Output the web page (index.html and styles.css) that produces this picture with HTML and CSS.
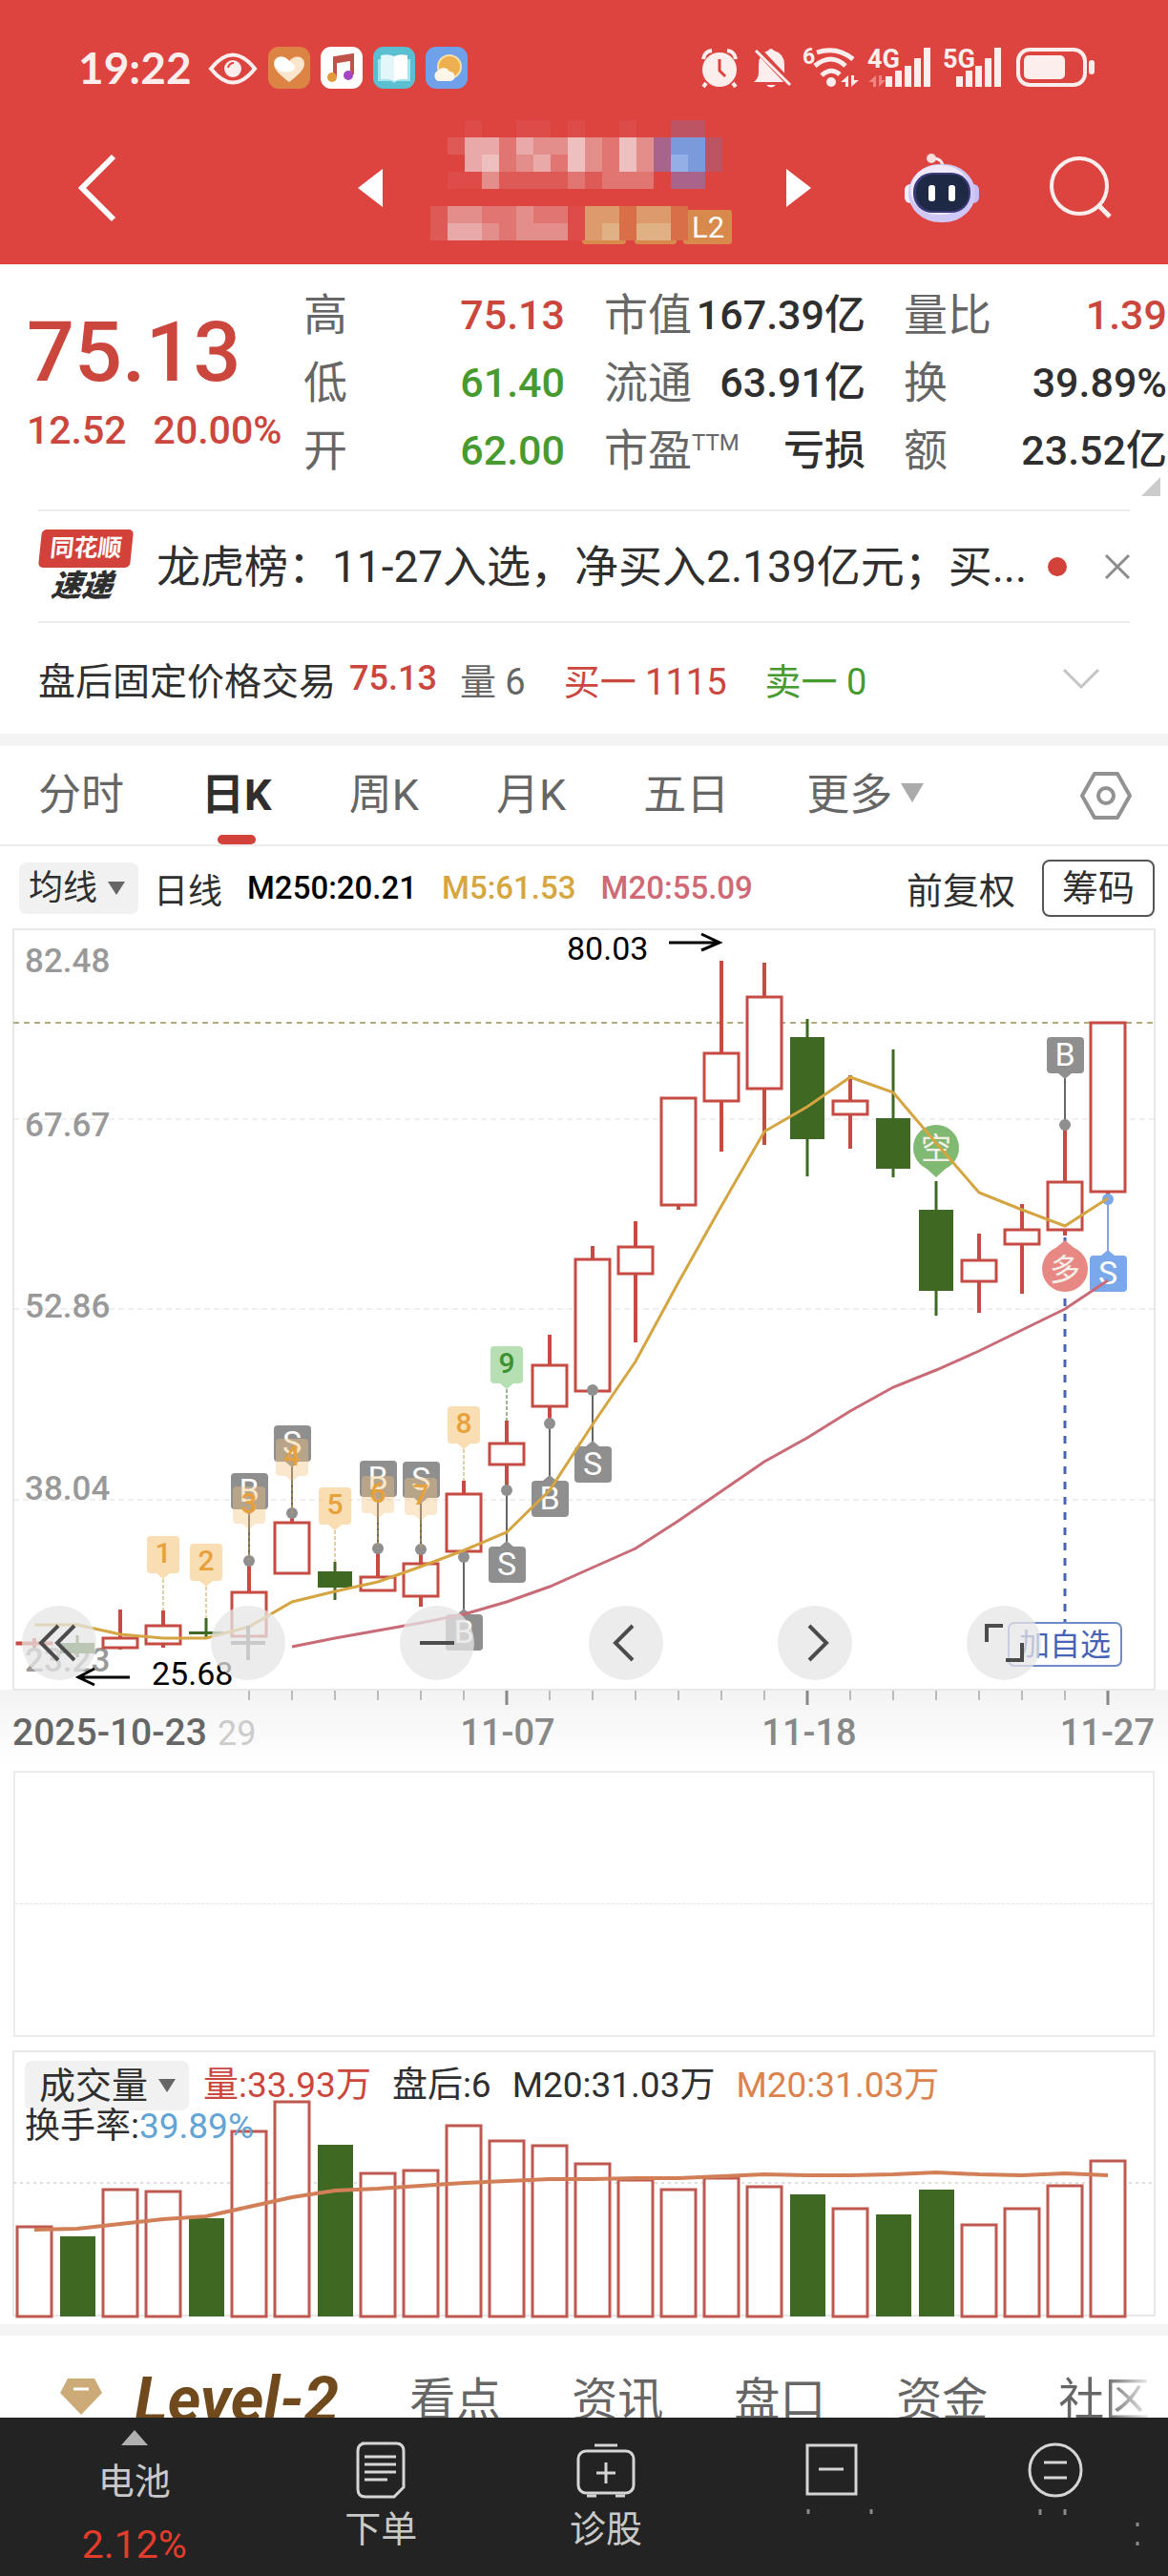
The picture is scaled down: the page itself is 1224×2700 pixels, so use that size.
FILE: index.html
```html
<!DOCTYPE html>
<html lang="zh-CN">

	<head>
		<meta charset="UTF-8">
		<meta name="viewport" content="width=device-width, initial-scale=1">
		<title>日K</title>
		<link rel="stylesheet" href="styles.css">
	</head>

	<body>
		<header id="header">
			<div class="status">
				<time>19:22</time>
				<svg class="eye" viewBox="0 0 50 44">
					<path d="M2 23Q25 -6 48 23Q25 52 2 23Z" fill="none" stroke="#fdeeee" stroke-width="4" />
					<circle cx="25" cy="23" r="9" fill="#fdeeee" />
					<path d="M20 22q1-5 6-5" fill="none" stroke="#dd433f" stroke-width="2" />
				</svg>
				<svg class="app" viewBox="0 0 44 44">
					<rect width="44" height="44" rx="11" fill="#dc8444" />
					<path d="M22 37C13 30 6 24 6 18C6 9 17 8 22 15C27 8 38 9 38 18C38 24 31 30 22 37Z" fill="#fbe6cd" />
					<path d="M8 22C3 13 13 7 20 13L28 20Q28 26 22 26Q14 28 8 22Z" fill="#fff" />
				</svg>
				<svg class="app" viewBox="0 0 44 44">
					<rect width="44" height="44" rx="11" fill="#fff" />
					<path d="M15 31V12L33 9V29" fill="none" stroke="#c0524a" stroke-width="4" />
					<path d="M15 15L33 12" stroke="#c0524a" stroke-width="5" />
					<circle cx="12" cy="32" r="5" fill="#e39a3c" />
					<circle cx="29" cy="30" r="5" fill="#a646c4" />
				</svg>
				<svg class="app" viewBox="0 0 44 44">
					<rect width="44" height="44" rx="11" fill="#5bbfd2" />
					<path d="M5 13H39V36H25L22 38L19 36H5Z" fill="#a5e3ee" />
					<path d="M8 9Q16 7 22 10V36Q16 33 8 34Z" fill="#e3f7fb" />
					<path d="M36 9Q28 7 22 10V36Q28 33 36 34Z" fill="#fff" />
				</svg>
				<svg class="app" viewBox="0 0 44 44">
					<rect width="44" height="44" rx="11" fill="#6fa0ea" />
					<circle cx="25" cy="21" r="13" fill="#f7e0a8" />
					<circle cx="25" cy="21" r="11" fill="#eeb04e" />
					<path d="M13 36a6 6 0 0 1 0-11a7 7 0 0 1 12 1a5 5 0 0 1 1 10Z" fill="#fff6ea" />
				</svg>
				<svg class="signals" viewBox="0 0 412 44">
					<g fill="#fdeeee">
						<circle cx="19" cy="24" r="18" />
						<path d="M5 38l-3 4M33 38l3 4M2 13q1-8 9-9M36 13q-1-8-9-9" fill="none" stroke="#fdeeee" stroke-width="4" />
						<path d="M19 13v12l6 6" fill="none" stroke="#dd433f" stroke-width="3" />
						<path d="M55 37q5-4 5-10v-8q0-12 10-15q3-4 6 0q11 3 11 15v8q0 6 4 10Z" />
						<path d="M68 40h10q-5 5-10 0" />
						<path d="M57 1l36 38" stroke="#dd433f" stroke-width="7" />
						<path d="M57 4l36 36" stroke="#fdeeee" stroke-width="3" />
						<circle cx="136" cy="37" r="5" />
						<path d="M121 6q21-7 38 7M119 20q17-14 32 0M126 30q10-9 19-1" fill="none" stroke="#fdeeee" stroke-width="5" />
						<path d="M154 30v12h-3v-5h-5zM157 42v-12h3v5h5z" />
						<text x="106" y="18" font-size="23">6</text>
						<text x="174" y="22" font-size="27">4G</text>
						<path d="M183 30v12h-3v-5h-5zM186 42v-12h3v5h4z" fill="#ef8583" />
						<path d="M193 31h7v11h-7zM203 25h7v17h-7zM213 20h7v22h-7zM223 12h7v30h-7zM233 1h7v41h-7z" />
						<text x="253" y="22" font-size="27">5G</text>
						<path d="M267 31h7v11h-7zM277 25h7v17h-7zM287 20h7v22h-7zM297 12h7v30h-7zM307 1h7v41h-7z" />
						<rect x="332" y="3" width="70" height="37" rx="12" fill="none" stroke="#fdeeee" stroke-width="4" />
						<rect x="338" y="9" width="43" height="25" rx="5" />
						<rect x="406" y="14" width="6" height="15" rx="3" />
					</g>
				</svg>
			</div>
			<nav class="title">
				<button class="back" aria-label="返回">
					<svg viewBox="0 0 40 72"><path d="M37 3L4 36L37 69" fill="none" stroke="#fff" stroke-width="6" /></svg>
				</button>
				<div class="stock">
					<button aria-label="上一只"><svg viewBox="0 0 26 40"><path d="M26 0V40L0 20Z" fill="#fff" /></svg></button>
					<svg id="mosaic" viewBox="0 0 323 144"></svg>
					<button aria-label="下一只"><svg viewBox="0 0 26 40"><path d="M0 0V40L26 20Z" fill="#fff" /></svg></button>
				</div>
				<div class="tools">
					<button aria-label="智能助手">
						<svg class="robot" viewBox="0 0 78 72">
							<path d="M28 5q12-1 12 10" fill="none" stroke="#f9e6ea" stroke-width="3" />
							<circle cx="28" cy="5" r="5" fill="#f9dcdc" />
							<rect x="0" y="32" width="12" height="20" rx="6" fill="#f3effc" />
							<rect x="66" y="32" width="12" height="20" rx="6" fill="#c5bdf4" />
							<rect x="4" y="11" width="70" height="61" rx="33" fill="#cfc8f6" />
							<rect x="6" y="12" width="62" height="52" rx="29" fill="#efe9fb" />
							<rect x="9" y="20" width="60" height="42" rx="20" fill="#3a3a78" />
							<rect x="12" y="22" width="55" height="38" rx="18" fill="#1d2945" />
							<rect x="25" y="33" width="7" height="17" rx="3" fill="#fff" />
							<rect x="46" y="33" width="7" height="17" rx="3" fill="#fff" />
						</svg>
					</button>
					<button aria-label="搜索">
						<svg class="search" viewBox="0 0 66 66"><circle cx="31" cy="31" r="29" fill="none" stroke="#fdeeee" stroke-width="4" /><path d="M51 51L63 63" stroke="#fdeeee" stroke-width="5" /></svg>
					</button>
				</div>
			</nav>
		</header>

		<section id="quote">
			<div class="now">
				<strong>75.13</strong>
				<p><span>12.52</span><span>20.00%</span></p>
			</div>
			<dl class="high">
				<div><dt>高</dt><dd class="up">75.13</dd></div>
				<div><dt>低</dt><dd class="down">61.40</dd></div>
				<div><dt>开</dt><dd class="down">62.00</dd></div>
			</dl>
			<dl class="value">
				<div><dt>市值</dt><dd>167.39亿</dd></div>
				<div><dt>流通</dt><dd>63.91亿</dd></div>
				<div><dt>市盈<sup>TTM</sup></dt><dd>亏损</dd></div>
			</dl>
			<dl class="rate">
				<div><dt>量比</dt><dd class="up">1.39</dd></div>
				<div><dt>换</dt><dd>39.89%</dd></div>
				<div><dt>额</dt><dd>23.52亿</dd></div>
			</dl>
			<i class="corner"></i>
		</section>

		<section id="news">
			<div class="logo"><b>同花顺</b><em>速递</em></div>
			<a href="#">龙虎榜：11-27入选，净买入2.139亿元；买...</a>
			<i class="dot"></i>
			<button aria-label="关闭"><svg viewBox="0 0 26 26"><path d="M1 1L25 25M25 1L1 25" stroke="#8c8c8c" stroke-width="3" /></svg></button>
		</section>

		<section id="after">
			<span class="name">盘后固定价格交易</span>
			<span class="up price">75.13</span>
			<span class="gray">量 6</span>
			<span class="up">买一 1115</span>
			<span class="down">卖一 0</span>
			<button aria-label="展开"><svg viewBox="0 0 38 22"><path d="M1 2L19 20L37 2" fill="none" stroke="#c4c4c4" stroke-width="3" /></svg></button>
		</section>

		<nav id="period">
			<a href="#">分时</a>
			<a href="#" class="active">日K</a>
			<a href="#">周K</a>
			<a href="#">月K</a>
			<a href="#">五日</a>
			<a href="#" class="more">更多</a>
			<button aria-label="设置">
				<svg viewBox="0 0 54 50"><path d="M15 2H39L52 25L39 48H15L2 25Z" fill="none" stroke="#929292" stroke-width="4" stroke-linejoin="round" /><circle cx="27" cy="25" r="8" fill="none" stroke="#929292" stroke-width="4" /></svg>
			</button>
		</nav>

		<div id="legend">
			<label class="pick"><select aria-label="指标"><option>均线</option></select></label>
			<span>日线</span>
			<span class="black">M250:20.21</span>
			<span class="gold">M5:61.53</span>
			<span class="pink">M20:55.09</span>
			<a href="#">前复权</a>
			<button>筹码</button>
		</div>

		<div id="kline">
			<svg id="kSvg" viewBox="0 960 1224 896"></svg>
			<div class="ctrls">
				<button aria-label="最左"><svg viewBox="0 0 78 78"><path d="M38 21L20 39L38 57M55 21L37 39L55 57" /></svg></button>
				<button aria-label="放大" class="off"><svg viewBox="0 0 78 78"><path d="M21 39H57M39 21V57" /></svg></button>
				<button aria-label="缩小"><svg viewBox="0 0 78 78"><path d="M21 39H57" /></svg></button>
				<button aria-label="左移"><svg viewBox="0 0 78 78"><path d="M46 21L28 39L46 57" /></svg></button>
				<button aria-label="右移"><svg viewBox="0 0 78 78"><path d="M33 21L51 39L33 57" /></svg></button>
				<button aria-label="全屏"><svg viewBox="0 0 78 78"><path d="M21 38V21H38M58 39V57H41" /></svg></button>
			</div>
		</div>

		<div id="blank">
			<div></div>
			<div></div>
		</div>

		<div id="volume">
			<svg id="vSvg" viewBox="0 2149 1224 287"></svg>
			<div class="info">
				<p>
					<label class="pick"><select aria-label="副图"><option>成交量</option></select></label>
					<span class="up">量:33.93万</span>
					<span>盘后:6</span>
					<span>M20:31.03万</span>
					<span class="orange">M20:31.03万</span>
				</p>
				<p class="turn">换手率:<span class="blue">39.89%</span></p>
			</div>
		</div>

		<nav id="tabs">
			<svg viewBox="0 0 44 38"><path d="M8 0H36L44 15L22 38L0 15Z" fill="#cdab78" /><path d="M14 11H30" stroke="#fff" stroke-width="3" /></svg>
			<a href="#" class="level">Level-2</a>
			<a href="#">看点</a>
			<a href="#">资讯</a>
			<a href="#">盘口</a>
			<a href="#">资金</a>
			<a href="#" class="last">社区</a>
		</nav>

		<footer id="bar">
			<a href="#" class="first">
				<i></i>
				<span>电池</span>
				<b>2.12%</b>
			</a>
			<a href="#">
				<svg viewBox="0 0 60 60"><path d="M10 2H46Q54 2 54 10V48L44 58H14Q6 58 6 50V10Q6 2 14 2M13 16H46M13 24H46M13 32H46M13 40H37" /></svg>
				<span>下单</span>
			</a>
			<a href="#">
				<svg viewBox="0 0 60 60"><path d="M18 4H42" /><rect x="1" y="10" width="58" height="44" rx="8" /><path d="M30 22V44M20 33H40M10 57H20M40 57H50" /></svg>
				<span>诊股</span>
			</a>
			<a href="#" aria-label="减">
				<svg viewBox="0 0 60 60"><rect x="5" y="4" width="51" height="51" /><path d="M17 29H43" /></svg>
				<svg class="smear" viewBox="0 0 200 40"><path d="M76 2v5M142 2v5" /></svg>
			</a>
			<a href="#" aria-label="等">
				<svg viewBox="0 0 60 60"><circle cx="30" cy="30" r="27" /><path d="M18 22H42M18 38H42" /></svg>
				<svg class="smear" viewBox="0 0 200 40"><path d="M84 2v6M110 2v6M186 16v4M186 36v4" /></svg>
			</a>
		</footer>
		<script src="chart.js"></script>
	</body>

</html>
```
FILE: styles.css
```css
html,
body {
	width: 100%;
	margin: 0;
}

body {
	background: #fff;
	color: #2f2f2f;
	font-family: Roboto, "Noto Sans CJK SC", sans-serif;
}

p,
dl,
dd {
	margin: 0;
}

a {
	text-decoration: none;
	color: inherit;
}

button {
	margin: 0;
	padding: 0;
	border: 0;
	background: none;
	color: inherit;
	font-family: inherit;
	cursor: pointer;
}

svg {
	display: block;
	overflow: visible;
}

.up {
	color: #cb463d !important;
}

.down {
	color: #479a2f !important;
}

/* 头部 */
#header {
	background: #dd433f;
	color: #fdeeee;
	padding: 49px 0 8px;
}

.status {
	display: flex;
	align-items: center;
	height: 44px;
	margin-bottom: 32px;
	padding: 0 77px 0 82px;
}

.status time {
	font: 700 46px/44px Lato, sans-serif;
	margin-right: 18px;
}

.status .eye {
	width: 50px;
	height: 44px;
	margin-right: 12px;
}

.status .app {
	width: 44px;
	height: 44px;
	margin-right: 11px;
}

.status .signals {
	width: 412px;
	height: 44px;
	margin-left: auto;
	font-weight: 700;
}

.title {
	display: grid;
	grid-template-columns: 1fr auto 1fr;
	align-items: center;
	height: 144px;
	padding: 0 58px 0 82px;
}

.back svg {
	width: 40px;
	height: 72px;
}

.stock {
	display: flex;
	align-items: center;
	gap: 50px;
	margin-left: -24px;
}

.stock button svg {
	width: 26px;
	height: 40px;
}

#mosaic {
	width: 323px;
	height: 144px;
}

.tools {
	display: flex;
	align-items: center;
	justify-content: flex-end;
	gap: 74px;
}

.robot {
	width: 78px;
	height: 72px;
}

.search {
	width: 66px;
	height: 66px;
}

/* 报价 */
#quote {
	position: relative;
	display: flex;
	height: 257px;
	padding-left: 28px;
}

#quote .now {
	width: 290px;
	color: #cb463d;
	padding-top: 42px;
	box-sizing: border-box;
}

.now strong {
	display: block;
	font-weight: 500;
	font-size: 88px;
	line-height: 100px;
}

.now p {
	display: flex;
	gap: 28px;
	font-weight: 500;
	font-size: 41px;
	line-height: 64px;
}

#quote dl {
	padding-top: 18px;
}

#quote dl div {
	display: flex;
	justify-content: space-between;
	height: 71px;
	line-height: 71px;
	white-space: nowrap;
}

#quote .high {
	width: 274px;
	margin-right: 41px;
}

#quote .value {
	width: 274px;
	margin-right: 40px;
}

#quote .rate {
	flex: 1;
	padding-right: 1px;
}

#quote dt {
	font-size: 46px;
	color: #666;
}

#quote dd {
	font-size: 43px;
	font-weight: 500;
}

#quote sup {
	font-size: 24px;
	line-height: 24px;
}

#quote .corner {
	position: absolute;
	right: 8px;
	bottom: 14px;
	border: 10px solid transparent;
	border-right-color: #ccc;
	border-bottom-color: #ccc;
}

#news {
	display: flex;
	align-items: center;
	height: 115px;
	margin: 0 40px;
	border-top: 2px solid #ececec;
	border-bottom: 2px solid #ececec;
}

.logo {
	width: 96px;
	margin-right: 28px;
	text-align: center;
	transform: skewX(-6deg);
}

.logo b {
	display: block;
	background: #d3423a;
	border-radius: 5px;
	color: #fff;
	font-size: 25px;
	line-height: 40px;
}

.logo em {
	display: block;
	font-size: 32px;
	font-weight: 900;
	line-height: 38px;
}

#news a {
	flex: 1;
	font-size: 46px;
	line-height: 60px;
	white-space: nowrap;
	overflow: hidden;
}

#news .dot {
	width: 20px;
	height: 20px;
	margin-right: 40px;
	border-radius: 50%;
	background: #d3423a;
}

#news button svg {
	width: 26px;
	height: 26px;
}

#after {
	display: flex;
	align-items: center;
	height: 116px;
	padding: 0 72px 0 40px;
	border-bottom: 13px solid #f4f4f4;
	font-size: 38px;
}

#after span {
	margin-right: 40px;
}

#after .name {
	margin-right: 14px;
	font-size: 39px;
}

#after .price {
	margin-right: 24px;
	font-size: 36px;
	font-weight: 500;
}

#after .gray {
	color: #666;
}

#after button {
	margin-left: auto;
}

#after button svg {
	width: 38px;
	height: 22px;
}

/* 周期 */
#period {
	display: flex;
	align-items: center;
	gap: 81px;
	height: 103px;
	padding: 0 38px 0 40px;
	border-bottom: 2px solid #ececec;
	color: #666;
	font-size: 45px;
}

#period a {
	position: relative;
	line-height: 103px;
}

#period .active {
	color: #2f2f2f;
	font-weight: 700;
}

#period .active:after {
	content: "";
	position: absolute;
	left: 50%;
	bottom: 0;
	width: 40px;
	height: 10px;
	margin-left: -20px;
	border-radius: 5px;
	background: #d3423a;
}

#period .more:after {
	content: "";
	display: inline-block;
	margin-left: 9px;
	vertical-align: 8px;
	border: 12px solid transparent;
	border-top: 20px solid #aaa;
	border-bottom: 0;
}

#period button {
	margin-left: auto;
}

#period button svg {
	width: 54px;
	height: 50px;
}

#legend {
	display: flex;
	align-items: center;
	box-sizing: border-box;
	height: 73px;
	padding: 14px 14px 0 20px;
	font-size: 36px;
	white-space: nowrap;
}

#legend span {
	margin-right: 26px;
}

#legend .black,
#legend .gold,
#legend .pink {
	font-size: 33px;
	font-weight: 500;
}

#legend .black {
	color: #000;
}

#legend .gold {
	color: #d6a63f;
}

#legend .pink {
	color: #cf6976;
}

#legend a {
	margin-left: auto;
	font-size: 38px;
}

#legend button {
	width: 118px;
	height: 60px;
	margin-left: 28px;
	border: 2px solid #555;
	border-radius: 8px;
	font-size: 38px;
	line-height: 56px;
}

.pick {
	display: inline-flex;
	align-items: center;
	height: 54px;
	padding: 0 14px 0 10px;
	margin-right: 16px;
	border-radius: 8px;
	background: #f1f1f1;
}

.pick select {
	appearance: none;
	margin: 0;
	padding: 0;
	border: 0;
	background: none;
	color: inherit;
	font: inherit;
}

.pick:after {
	content: "";
	margin-left: 10px;
	border: 9px solid transparent;
	border-top: 14px solid #666;
	border-bottom: 0;
}

/* K线 */
#kline,
#volume {
	position: relative;
}

#kSvg,
#vSvg {
	width: 100%;
	height: auto;
}

.ctrls {
	position: absolute;
	left: 23px;
	right: 133px;
	bottom: 95px;
	display: flex;
	justify-content: space-between;
}

.ctrls button {
	width: 78px;
	height: 78px;
	border-radius: 50%;
	background: rgba(230, 230, 230, .75);
}

.ctrls path {
	fill: none;
	stroke: #4c4c4c;
	stroke-width: 4;
}

.ctrls .off path {
	stroke: #c9c9c9;
}

#blank {
	margin: 0 14px 14px;
	border: 2px solid #ececec;
}

#blank div {
	height: 137px;
}

#blank div:first-child {
	border-bottom: 1px dashed #e4e4e4;
}

.info {
	position: absolute;
	left: 26px;
	top: 11px;
	font-size: 37px;
	white-space: nowrap;
}

.info p {
	display: flex;
	align-items: center;
	line-height: 52px;
}

.info .pick {
	height: 52px;
	padding-left: 15px;
	margin-right: 15px;
	font-size: 38px;
}

.info p > span {
	margin-right: 22px;
}

.info .turn {
	line-height: 34px;
}

.info .blue {
	color: #62a4d6;
}

.info .orange {
	color: #dc824c;
}

/* 底部 */
#tabs {
	display: flex;
	height: 86px;
	padding-left: 63px;
	border-top: 12px solid #f4f4f4;
	overflow: hidden;
	color: #666;
	font-size: 48px;
	line-height: 136px;
	white-space: nowrap;
}

#tabs svg {
	width: 44px;
	height: 38px;
	margin: 45px 34px 0 0;
}

#tabs a {
	margin-right: 74px;
}

#tabs .level {
	color: #704a1c;
	font-size: 66px;
	font-weight: 700;
	font-style: italic;
}

#tabs .last {
	margin-right: 0;
	background: linear-gradient(90deg, #666 50%, #eee);
	background-clip: text;
	-webkit-background-clip: text;
	color: transparent;
}

#bar {
	display: flex;
	height: 166px;
	background: #232323;
	color: #c9c9c9;
	font-size: 38px;
	line-height: 46px;
}

#bar a {
	flex: 1;
	display: flex;
	flex-direction: column;
	align-items: center;
	box-sizing: border-box;
	padding-top: 25px;
}

#bar .first {
	flex: 0 0 23%;
	padding-top: 13px;
}

#bar .first i {
	border: 14px solid transparent;
	border-bottom: 16px solid #b0b0b0;
	border-top: 0;
}

#bar .first span {
	margin: 15px 0 20px;
}

#bar .first b {
	color: #e23c2c;
	font-size: 41px;
	font-weight: 400;
}

#bar svg {
	width: 60px;
	height: 60px;
	margin-bottom: 9px;
	fill: none;
	stroke: #d5d5d5;
	stroke-width: 3;
}

#bar .smear {
	width: 200px;
	height: 40px;
	stroke: #8a8a8a;
}
```
FILE: chart.js
```js
var NS = 26; //一共26根K线
var step = 45;
var x0 = 36;
var red = '#c64b42';
var green = '#3f6822';

function cx(i) {
	return x0 + i * step;
}

//每根K线：最高，实体上沿，实体下沿，最低，是否下跌
var k = [
	[1717, 1721, 1724, 1727, 0],
	[1714, 1722, 1733, 1737, 1],
	[1687, 1716, 1728, 1729, 0],
	[1688, 1703, 1724, 1727, 0],
	[1696, 1710, 1713, 1718, 1],
	[1635, 1668, 1716, 1716, 0],
	[1587, 1595, 1650, 1650, 0],
	[1637, 1647, 1664, 1677, 1],
	[1623, 1652, 1668, 1668, 0],
	[1624, 1638, 1674, 1684, 0],
	[1552, 1565, 1627, 1632, 0],
	[1489, 1512, 1536, 1562, 0],
	[1399, 1430, 1475, 1492, 0],
	[1306, 1319, 1459, 1459, 0],
	[1280, 1306, 1336, 1407, 0],
	[1150, 1150, 1264, 1268, 0],
	[1007, 1103, 1155, 1207, 0],
	[1009, 1044, 1142, 1200, 0],
	[1068, 1087, 1194, 1233, 1],
	[1127, 1153, 1169, 1204, 0],
	[1100, 1172, 1225, 1234, 1],
	[1238, 1268, 1353, 1379, 1],
	[1293, 1320, 1344, 1376, 0],
	[1262, 1288, 1305, 1356, 0],
	[1179, 1238, 1290, 1295, 0],
	[1071, 1071, 1250, 1256, 0]
];
var m5 = [1703, 1703, 1713, 1717, 1717, 1705, 1679, 1668, 1658, 1642, 1625, 1606, 1562, 1493, 1427, 1344, 1264, 1186, 1160, 1129, 1145, 1198, 1250, 1268, 1285, 1256];
var m20 = [1726, 1717, 1709, 1701, 1692, 1679, 1663, 1643, 1623, 1594, 1563, 1532, 1507, 1479, 1454, 1436, 1416, 1394, 1372, 1342];
//成交量柱顶
var vol = [2334, 2344, 2295, 2297, 2325, 2234, 2203, 2248, 2278, 2275, 2228, 2244, 2249, 2268, 2285, 2295, 2283, 2292, 2300, 2315, 2321, 2295, 2332, 2315, 2291, 2265];
var volM = [2337, 2336, 2331, 2326, 2323, 2313, 2303, 2296, 2294, 2291, 2288, 2286, 2284, 2284, 2283, 2283, 2281, 2279, 2280, 2280, 2279, 2277, 2279, 2280, 2278, 2280];
//九转：下标，顶部，数字
var nine = [[3, 1610, 1], [4, 1618, 2], [5, 1558, 3], [6, 1508, 4], [7, 1559, 5], [8, 1547, 6], [9, 1549, 7], [10, 1474, 8], [11, 1411, 9]];
//买卖点：下标，方块顶部，圆点，文字，颜色
var trade = [
	[5, 1544, 1636, 'B'], [6, 1494, 1586, 'S'], [8, 1531, 1623, 'B'], [9, 1532, 1624, 'S'],
	[10, 1692, 1632, 'B'], [11, 1621, 1562, 'S'], [12, 1552, 1492, 'B'], [13, 1516, 1457, 'S'],
	[24, 1087, 1179, 'B'], [25, 1316, 1257, 'S', '#7aa8ea']
];

function line(x1, y1, x2, y2, color, w, dash) {
	return `<line x1="${x1}" y1="${y1}" x2="${x2}" y2="${y2}" stroke="${color}" stroke-width="${w}" stroke-dasharray="${dash || 'none'}"/>`;
}

function text(x, y, size, color, str, more) {
	return `<text x="${x}" y="${y}" font-size="${size}" fill="${color}" ${more || ''}>${str}</text>`;
}

function poly(arr, from, color, w) {
	var pts = arr.map(function(y, i) {
		return cx(i + from) + ',' + y;
	}).join(' ');
	return `<polyline points="${pts}" fill="none" stroke="${color}" stroke-width="${w}"/>`;
}

//多空圆标，tip是尖角的位置
function round(i, y, tip, color, str) {
	var x = cx(i);
	var base = tip > y ? y + 20 : y - 20;
	return `<path d="M${x - 12} ${base}L${x} ${tip}L${x + 12} ${base}Z" fill="${color}"/><circle cx="${x}" cy="${y}" r="24" fill="${color}"/>` +
		text(x, y + 12, 32, '#f6efe9', str, 'text-anchor="middle"');
}

function drawK() {
	var h = '<defs><linearGradient id="fade" x1="0" y1="0" x2="0" y2="1"><stop offset="0" stop-color="#f3f3f3"/><stop offset="1" stop-color="#fff"/></linearGradient></defs>';
	h += '<rect x="0" y="1771" width="1224" height="80" fill="url(#fade)"/>';
	h += '<rect x="14" y="974" width="1196" height="797" fill="#fff" stroke="#e8e8e8" stroke-width="2"/>';
	[1173, 1372, 1572].forEach(function(y) {
		h += line(14, y, 1210, y, '#e0e0e0', 1, '6 4');
	});
	h += line(14, 1072, 1210, 1072, '#b3a878', 2, '6 5');
	[['82.48', 1019], ['67.67', 1191], ['52.86', 1381], ['38.04', 1572], ['23.23', 1752]].forEach(function(a) {
		h += text(26, a[1], 35, '#999', a[0], 'font-weight="500"');
	});
	//刻度
	for(var i = 5; i < NS; i++) {
		var big = i === 11 || i === 18 || i === 25;
		h += line(cx(i), 1772, cx(i), big ? 1787 : 1782, big ? '#888' : '#bbb', big ? 3 : 2);
	}
	h += text(13, 1829, 39, '#666', '2025-10-23', 'font-weight="500"');
	h += text(228, 1829, 36, '#ccc', '29');
	h += text(532, 1829, 38, '#888', '11-07', 'text-anchor="middle" font-weight="500"');
	h += text(848, 1829, 38, '#888', '11-18', 'text-anchor="middle" font-weight="500"');
	h += text(1210, 1829, 38, '#888', '11-27', 'text-anchor="end" font-weight="500"');
	//蓝色虚线，加自选
	h += line(cx(24), 1297, cx(24), 1700, '#4763b5', 3, '8 8');
	h += '<rect x="1057" y="1701" width="118" height="45" rx="6" fill="#fff" stroke="#7089c8" stroke-width="2"/>';
	h += text(1116, 1735, 32, '#4763b5', '加自选', 'text-anchor="middle"');
	k.forEach(function(a, i) {
		var x = cx(i);
		if(a[4]) {
			h += line(x, a[0], x, a[3], green, 3);
			h += `<rect x="${x - 18}" y="${a[1]}" width="36" height="${a[2] - a[1]}" fill="${green}"/>`;
		} else {
			h += line(x, a[0], x, a[1], red, 4) + line(x, a[2], x, a[3], red, 4);
			h += `<rect x="${x - 18}" y="${a[1] + 1}" width="36" height="${a[2] - a[1] - 2}" fill="#fff" stroke="${red}" stroke-width="3"/>`;
		}
	});
	trade.forEach(function(a) {
		var x = cx(a[0]);
		var c = a[4] || '#8f8f8f';
		var below = a[1] > a[2];
		var y = below ? a[1] : a[1] + 38;
		h += line(x, a[2], x, y, a[4] || '#666', 2);
		h += `<circle cx="${x}" cy="${a[2]}" r="6" fill="${c}"/>`;
		h += `<rect x="${x - 19}" y="${a[1]}" width="39" height="38" rx="4" fill="${c}"/>`;
		h += `<path d="M${x - 7} ${y}L${x} ${below ? y - 6 : y + 6}L${x + 7} ${y}Z" fill="${c}"/>`;
		h += text(x, a[1] + 30, 34, '#fff', a[3], 'text-anchor="middle"');
	});
	nine.forEach(function(a) {
		var x = cx(a[0]);
		var g = a[2] === 9;
		//和买卖点重叠的更透明一些
		var op = g ? 1 : (a[2] === 3 || a[2] === 4 || a[2] === 6 || a[2] === 7) ? 0.4 : 0.6;
		h += line(x, a[1] + 45, x, k[a[0]][0], g ? '#3f6822' : '#c9a04a', 1, '4 2');
		h += `<path d="M${x - 17} ${a[1] + 4}q0-4 4-4h26q4 0 4 4v31q0 4-4 4h-6l-7 6l-7-6h-6q-4 0-4-4z" fill="${g ? '#b6dfb4' : '#f5c680'}" fill-opacity="${op}"/>`;
		h += text(x, a[1] + 28, 30, g ? '#3d9130' : '#e8a13a', a[2], 'text-anchor="middle" font-weight="500"');
	});
	h += round(21, 1203, 1234, '#80b971', '空');
	h += round(24, 1330, 1300, '#e88885', '多');
	h += poly(m5, 0, '#d4a541', 3) + poly(m20, 6, '#c96a77', 3);
	//最高最低价
	h += text(594, 1006, 34, '#000', '80.03');
	h += '<path d="M701 988H754M735 979L754 988L735 996" fill="none" stroke="#000" stroke-width="3"/>';
	h += text(159, 1766, 34, '#000', '25.68');
	h += '<path d="M136 1758H82M99 1749L82 1758L99 1766" fill="none" stroke="#000" stroke-width="3"/>';
	document.getElementById('kSvg').innerHTML = h;
}

function drawVol() {
	var h = '<rect x="14" y="2150" width="1196" height="277" fill="#fff" stroke="#e8e8e8" stroke-width="2"/>';
	h += line(14, 2288, 1210, 2288, '#ddd', 2, '3 4');
	vol.forEach(function(y, i) {
		var x = cx(i) - 18;
		if(k[i][4]) {
			h += `<rect x="${x}" y="${y}" width="37" height="${2428 - y}" fill="${green}"/>`;
		} else {
			h += `<rect x="${x}" y="${y}" width="36" height="${2428 - y}" fill="#fff" stroke="#bf5850" stroke-width="3"/>`;
		}
	});
	h += poly(volM, 0, '#d27f58', 4);
	document.getElementById('vSvg').innerHTML = h;
}

//股票名称的马赛克，每格18，字母对应颜色
var tint = {
	a: '#dd4c48', b: '#de5a57', c: '#e07572', d: '#e48e8c', e: '#e8a9a8', f: '#edc0bf',
	p: '#a8648a', q: '#7b9adb', r: '#93afe5', s: '#bc5464', o: '#d96f49', y: '#dd9a6c', z: '#dfb184'
};

function cells(str, col, y) {
	return str.split('').map(function(c, i) {
		return tint[c] ? `<rect x="${(col + i) * 18}" y="${y}" width="18" height="18" fill="${tint[c]}"/>` : '';
	}).join('');
}

function drawMosaic() {
	var h = '';
	h += cells('a..aa.a..a..ss', 2, 1);
	h += cells('beeceddfdcfdpqqs', 1, 19);
	h += cells('.efcdecfdcfdprqs', 1, 37);
	h += cells('aadbbbbcbccc.pp', 1, 55);
	h += '<rect x="159" y="120" width="46" height="11" rx="3" fill="#d88a4d"/><rect x="214" y="120" width="44" height="11" rx="3" fill="#d88a4d"/>';
	h += '<rect x="265" y="95" width="51" height="36" rx="3" fill="#d88a4d"/>';
	h += cells('bddccdccayyoyyo', 0, 91);
	h += cells('beedcdddayzozzo', 0, 109);
	h += text(291, 124, 31, '#fff', 'L2', 'text-anchor="middle"');
	document.getElementById('mosaic').innerHTML = h;
}

drawMosaic();
drawK();
drawVol();
```
